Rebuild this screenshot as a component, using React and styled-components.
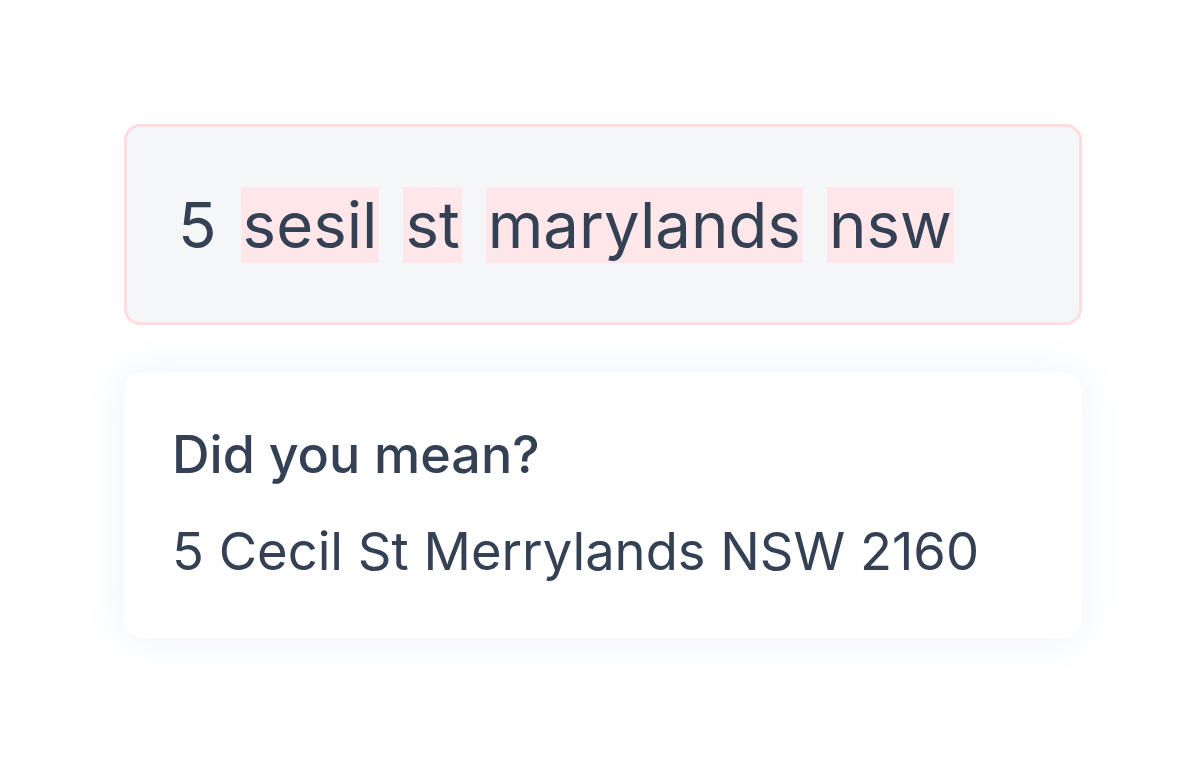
import React from "react";
import styled, { createGlobalStyle } from "styled-components";

const GlobalStyle = createGlobalStyle`
  html, body {
    margin: 0;
    padding: 0;
    background: #ffffff;
  }
  body {
    font-family: Inter, "Noto Sans", sans-serif;
    color: #344054;
  }
`;

const Page = styled.div`
  width: 1204px;
  height: 761px;
  box-sizing: border-box;
  padding: 124px 122px 0 124px;
  display: flex;
  flex-direction: column;
  gap: 47px;
`;

const InputBox = styled.div`
  height: 201px;
  box-sizing: border-box;
  border: 3px solid #ffdde0;
  border-radius: 16px;
  background: #f5f6f8;
  padding: 0 51px;
  display: flex;
  align-items: center;
  gap: 24px;
  font-size: 63.5px;
`;

const Word = styled.span`
  display: inline-block;
  line-height: 76px;
  padding: 0 ${(p) => (p.$flagged ? "2px" : "0")};
  background: ${(p) => (p.$flagged ? "#ffe6e8" : "transparent")};
`;

const SuggestCard = styled.div`
  height: 266px;
  box-sizing: border-box;
  border-radius: 20px;
  background: #ffffff;
  box-shadow: 0 0 40px rgba(59, 130, 246, 0.1);
  padding: 51px 48px 0;
  display: flex;
  flex-direction: column;
  gap: 32px;
`;

const Title = styled.div`
  font-size: 52px;
  font-weight: 500;
  line-height: 64px;
`;

const Address = styled.div`
  font-size: 52.5px;
  font-weight: 400;
  line-height: 64px;
`;

const words = [
  { text: "5", flagged: false },
  { text: "sesil", flagged: true },
  { text: "st", flagged: true },
  { text: "marylands", flagged: true },
  { text: "nsw", flagged: true },
];

export default function App() {
  return (
    <>
      <GlobalStyle />
      <Page>
        <InputBox>
          {words.map((w) => (
            <Word key={w.text} $flagged={w.flagged}>
              {w.text}
            </Word>
          ))}
        </InputBox>
        <SuggestCard>
          <Title>Did you mean?</Title>
          <Address>5 Cecil St Merrylands NSW 2160</Address>
        </SuggestCard>
      </Page>
    </>
  );
}
